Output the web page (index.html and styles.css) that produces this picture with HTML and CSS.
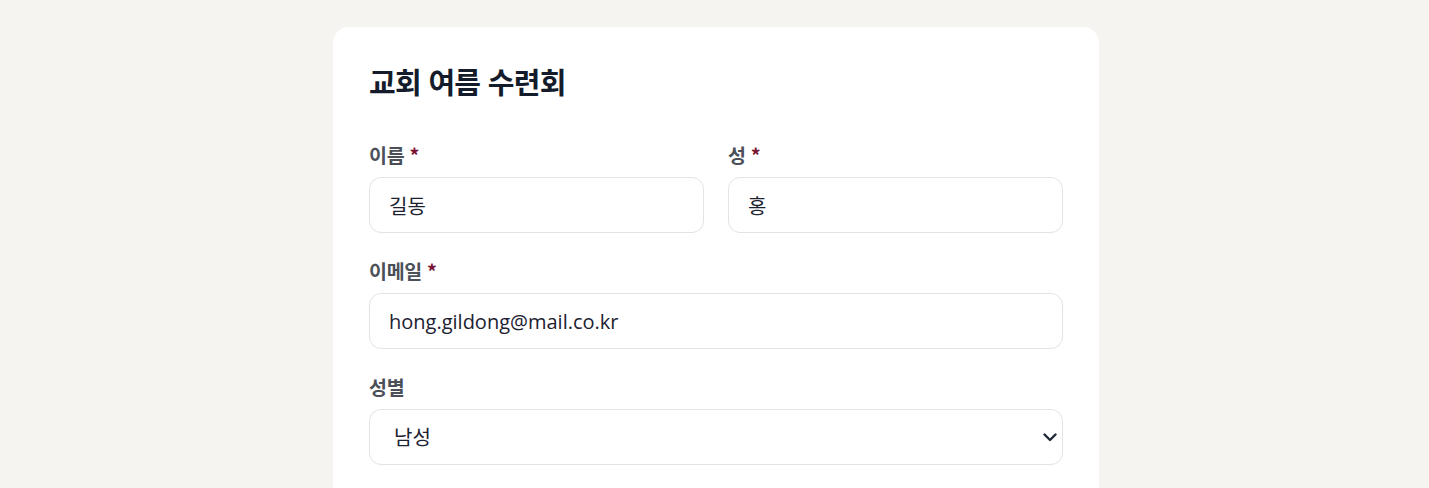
FILE: index.html
```html
<!DOCTYPE html>
<html lang="ko">
<head>
<meta charset="utf-8">
<title>교회 여름 수련회</title>
<link rel="stylesheet" href="styles.css">
</head>
<body>
<main class="page">
  <section class="card">
    <h1 class="title">교회 여름 수련회</h1>
    <form class="form">
      <div class="row">
        <div class="field">
          <label class="label">이름 <span class="req">*</span></label>
          <input class="input" type="text" value="길동">
        </div>
        <div class="field">
          <label class="label">성 <span class="req">*</span></label>
          <input class="input" type="text" value="홍">
        </div>
      </div>
      <div class="field">
        <label class="label">이메일 <span class="req">*</span></label>
        <input class="input" type="email" value="hong.gildong@mail.co.kr">
      </div>
      <div class="field">
        <label class="label">성별</label>
        <div class="select-wrap">
          <select class="input select">
            <option>남성</option>
            <option>여성</option>
          </select>
          <svg class="chev" width="14" height="9" viewBox="0 0 14 9"><path d="M1.5 1.5 L7 7 L12.5 1.5" fill="none" stroke="#1f2937" stroke-width="2.4" stroke-linecap="round" stroke-linejoin="round"/></svg>
        </div>
      </div>
    </form>
  </section>
</main>
</body>
</html>
```
FILE: styles.css
```css
* { box-sizing: border-box; }
html, body { margin: 0; padding: 0; }
body {
  background: #f5f4f0;
  font-family: "Open Sans", "Noto Sans CJK KR", sans-serif;
  color: #1f2937;
}
.page {
  display: flex;
  justify-content: center;
  padding-top: 27px;
  padding-left: 3px;
}
.card {
  width: 766px;
  background: #ffffff;
  border-radius: 16px;
  padding: 36px 36px 40px;
  min-height: 500px;
}
.title {
  margin: 0 0 42px;
  font-family: "Noto Sans CJK KR", sans-serif;
  font-size: 29px;
  line-height: 37px;
  font-weight: 700;
  color: #141c2b;
  letter-spacing: -0.7px;
}
.form {
  display: flex;
  flex-direction: column;
  gap: 25px;
}
.row {
  display: grid;
  grid-template-columns: 1fr 1fr;
  gap: 24px;
}
.field {
  display: flex;
  flex-direction: column;
  gap: 9px;
}
.label {
  font-family: "Noto Sans CJK KR", sans-serif;
  font-size: 19.5px;
  line-height: 26px;
  font-weight: 700;
  color: #4b5058;
  letter-spacing: -0.3px;
}
.req { color: #7a1232; }
.input {
  height: 56px;
  width: 100%;
  border: 1px solid #e3e3e3;
  border-radius: 12px;
  padding: 0 19px;
  font-family: "Open Sans", "Noto Sans CJK KR", sans-serif;
  font-size: 20px;
  color: #1c2230;
  background: #fff;
  outline: none;
}
.select-wrap { position: relative; }
.select {
  appearance: none;
  -webkit-appearance: none;
  padding-left: 24px;
}
.chev {
  position: absolute;
  right: 6px;
  top: 24px;
  pointer-events: none;
}
```
